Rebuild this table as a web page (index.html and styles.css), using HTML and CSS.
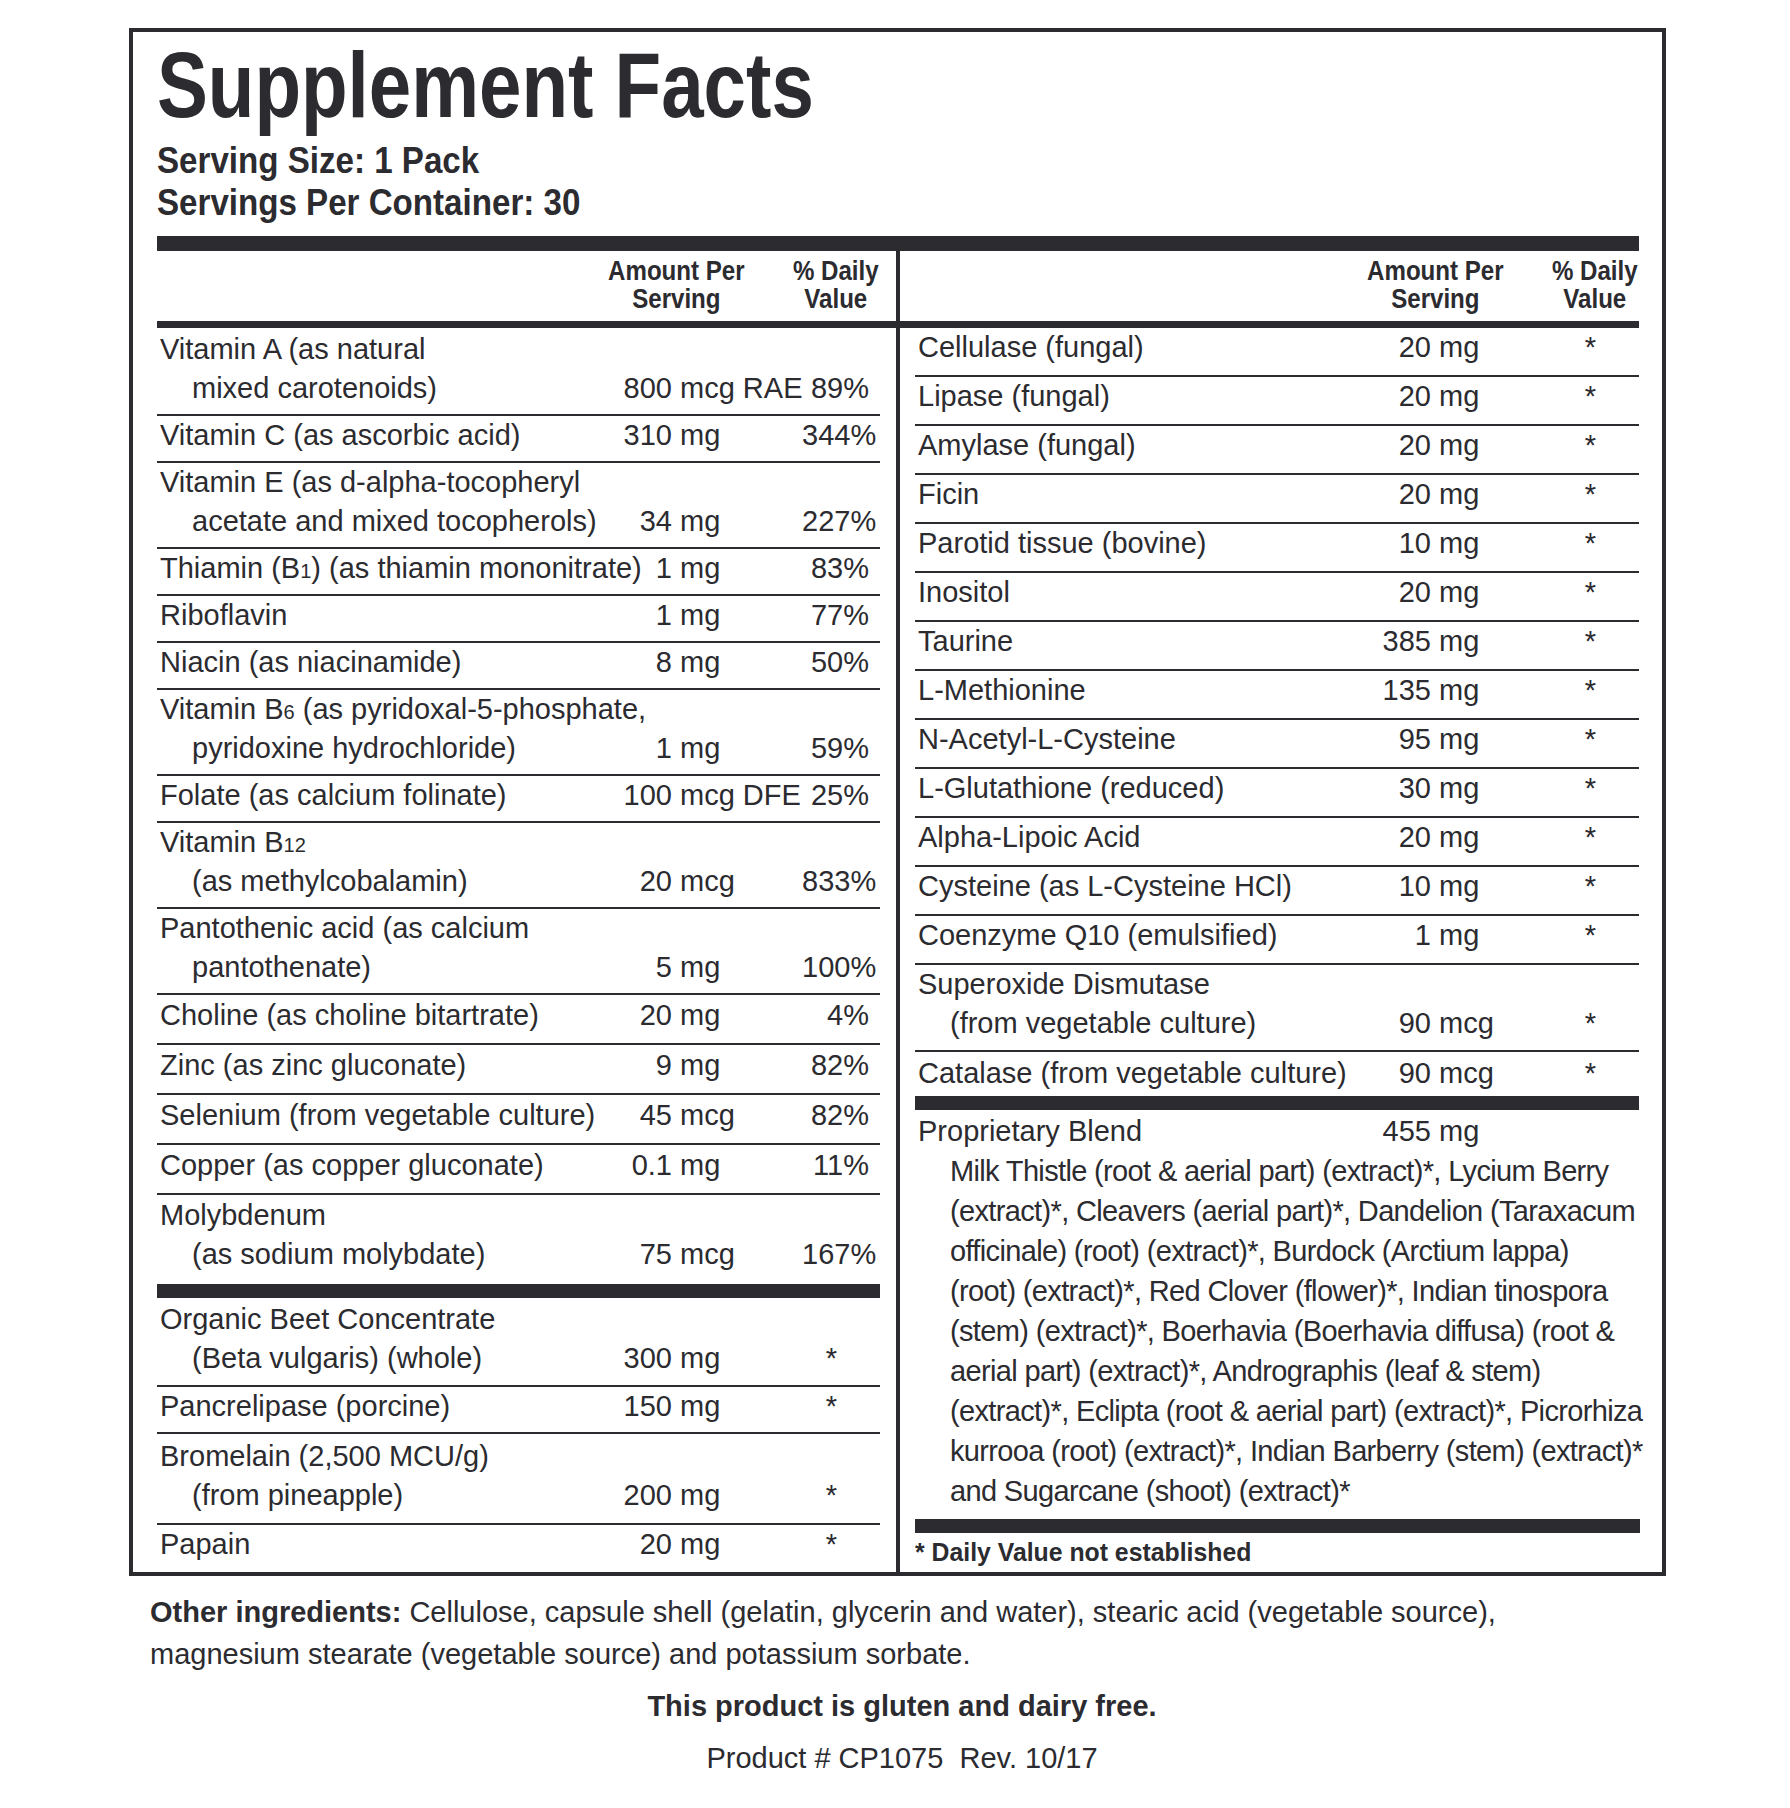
FILE: index.html
```html
<!DOCTYPE html>
<html lang="en">
<head>
<meta charset="utf-8">
<title>Supplement Facts</title>
<link rel="stylesheet" href="styles.css">
</head>
<body>
<div class="label">
  <h1 class="title">Supplement Facts</h1>
  <div class="serving">Serving Size: 1 Pack<br>Servings Per Container: 30</div>
  <div class="bar bar-top"></div>
  <div class="panel">
    <div class="col-head"><span></span><span class="hcell">Amount Per<br>Serving</span><span></span><span class="hcell">% Daily<br>Value</span></div>
    <div class="divider"></div>
    <div class="col-head"><span></span><span class="hcell">Amount Per<br>Serving</span><span></span><span class="hcell">% Daily<br>Value</span></div>
  </div>
  <div class="bar bar-mid"></div>
  <div class="panel">
    <div class="col col-left">
      <div class="row first"><span class="name">Vitamin A (as natural<br><span class="ind">mixed carotenoids)</span></span><span class="num">800</span><span class="unit">mcg RAE</span><span class="dv">89%</span></div>
      <div class="row"><span class="name">Vitamin C (as ascorbic acid)</span><span class="num">310</span><span class="unit">mg</span><span class="dv">344%</span></div>
      <div class="row"><span class="name">Vitamin E (as d-alpha-tocopheryl<br><span class="ind">acetate and mixed tocopherols)</span></span><span class="num">34</span><span class="unit">mg</span><span class="dv">227%</span></div>
      <div class="row"><span class="name">Thiamin (B<span class="sm">1</span>) (as thiamin mononitrate)</span><span class="num">1</span><span class="unit">mg</span><span class="dv">83%</span></div>
      <div class="row"><span class="name">Riboflavin</span><span class="num">1</span><span class="unit">mg</span><span class="dv">77%</span></div>
      <div class="row"><span class="name">Niacin (as niacinamide)</span><span class="num">8</span><span class="unit">mg</span><span class="dv">50%</span></div>
      <div class="row"><span class="name">Vitamin B<span class="sm">6</span> (as pyridoxal-5-phosphate,<br><span class="ind">pyridoxine hydrochloride)</span></span><span class="num">1</span><span class="unit">mg</span><span class="dv">59%</span></div>
      <div class="row"><span class="name">Folate (as calcium folinate)</span><span class="num">100</span><span class="unit">mcg DFE</span><span class="dv">25%</span></div>
      <div class="row"><span class="name">Vitamin B<span class="sm">12</span><br><span class="ind">(as methylcobalamin)</span></span><span class="num">20</span><span class="unit">mcg</span><span class="dv">833%</span></div>
      <div class="row"><span class="name">Pantothenic acid (as calcium<br><span class="ind">pantothenate)</span></span><span class="num">5</span><span class="unit">mg</span><span class="dv">100%</span></div>
      <div class="row roomy"><span class="name">Choline (as choline bitartrate)</span><span class="num">20</span><span class="unit">mg</span><span class="dv">4%</span></div>
      <div class="row roomy"><span class="name">Zinc (as zinc gluconate)</span><span class="num">9</span><span class="unit">mg</span><span class="dv">82%</span></div>
      <div class="row roomy"><span class="name">Selenium (from vegetable culture)</span><span class="num">45</span><span class="unit">mcg</span><span class="dv">82%</span></div>
      <div class="row roomy"><span class="name">Copper (as copper gluconate)</span><span class="num">0.1</span><span class="unit">mg</span><span class="dv">11%</span></div>
      <div class="row roomy last-above-bar"><span class="name">Molybdenum<br><span class="ind">(as sodium molybdate)</span></span><span class="num">75</span><span class="unit">mcg</span><span class="dv">167%</span></div>
      <div class="bar bar-col"></div>
      <div class="row beet"><span class="name">Organic Beet Concentrate<br><span class="ind">(Beta vulgaris) (whole)</span></span><span class="num">300</span><span class="unit">mg</span><span class="dv star">*</span></div>
      <div class="row"><span class="name">Pancrelipase (porcine)</span><span class="num">150</span><span class="unit">mg</span><span class="dv star">*</span></div>
      <div class="row bromelain"><span class="name">Bromelain (2,500 MCU/g)<br><span class="ind">(from pineapple)</span></span><span class="num">200</span><span class="unit">mg</span><span class="dv star">*</span></div>
      <div class="row papain"><span class="name">Papain</span><span class="num">20</span><span class="unit">mg</span><span class="dv star">*</span></div>
    </div>
    <div class="divider"></div>
    <div class="col col-right">
      <div class="row"><span class="name">Cellulase (fungal)</span><span class="num">20</span><span class="unit">mg</span><span class="dv star">*</span></div>
      <div class="row"><span class="name">Lipase (fungal)</span><span class="num">20</span><span class="unit">mg</span><span class="dv star">*</span></div>
      <div class="row"><span class="name">Amylase (fungal)</span><span class="num">20</span><span class="unit">mg</span><span class="dv star">*</span></div>
      <div class="row"><span class="name">Ficin</span><span class="num">20</span><span class="unit">mg</span><span class="dv star">*</span></div>
      <div class="row"><span class="name">Parotid tissue (bovine)</span><span class="num">10</span><span class="unit">mg</span><span class="dv star">*</span></div>
      <div class="row"><span class="name">Inositol</span><span class="num">20</span><span class="unit">mg</span><span class="dv star">*</span></div>
      <div class="row"><span class="name">Taurine</span><span class="num">385</span><span class="unit">mg</span><span class="dv star">*</span></div>
      <div class="row"><span class="name">L-Methionine</span><span class="num">135</span><span class="unit">mg</span><span class="dv star">*</span></div>
      <div class="row"><span class="name">N-Acetyl-L-Cysteine</span><span class="num">95</span><span class="unit">mg</span><span class="dv star">*</span></div>
      <div class="row"><span class="name">L-Glutathione (reduced)</span><span class="num">30</span><span class="unit">mg</span><span class="dv star">*</span></div>
      <div class="row"><span class="name">Alpha-Lipoic Acid</span><span class="num">20</span><span class="unit">mg</span><span class="dv star">*</span></div>
      <div class="row"><span class="name">Cysteine (as L-Cysteine HCl)</span><span class="num">10</span><span class="unit">mg</span><span class="dv star">*</span></div>
      <div class="row"><span class="name">Coenzyme Q10 (emulsified)</span><span class="num">1</span><span class="unit">mg</span><span class="dv star">*</span></div>
      <div class="row sod"><span class="name">Superoxide Dismutase<br><span class="ind">(from vegetable culture)</span></span><span class="num">90</span><span class="unit">mcg</span><span class="dv star">*</span></div>
      <div class="row catalase"><span class="name">Catalase (from vegetable culture)</span><span class="num">90</span><span class="unit">mcg</span><span class="dv star">*</span></div>
      <div class="bar bar-col"></div>
      <div class="blend">
        <div class="row blend-head"><span class="name">Proprietary Blend</span><span class="num">455</span><span class="unit">mg</span><span class="dv"></span></div>
        <p class="blend-text">Milk Thistle (root &amp; aerial part) (extract)*, Lycium Berry<br>(extract)*, Cleavers (aerial part)*, Dandelion (Taraxacum<br>officinale) (root) (extract)*, Burdock (Arctium lappa)<br>(root) (extract)*, Red Clover (flower)*, Indian tinospora<br>(stem) (extract)*, Boerhavia (Boerhavia diffusa) (root &amp;<br>aerial part) (extract)*, Andrographis (leaf &amp; stem)<br>(extract)*, Eclipta (root &amp; aerial part) (extract)*, Picrorhiza<br>kurrooa (root) (extract)*, Indian Barberry (stem) (extract)*<br>and Sugarcane (shoot) (extract)*</p>
      </div>
      <div class="bar bar-col bar-wide"></div>
      <div class="note"><span class="note-text">* Daily Value not established</span></div>
    </div>
  </div>
</div>
<div class="footer">
  <p class="other"><b>Other ingredients:</b> Cellulose, capsule shell (gelatin, glycerin and water), stearic acid (vegetable source), magnesium stearate (vegetable source) and potassium sorbate.</p>
  <p class="gf">This product is gluten and dairy free.</p>
  <p class="prod">Product # CP1075&nbsp; Rev. 10/17</p>
</div>
</body>
</html>
```
FILE: styles.css
```css
* {
  box-sizing: border-box;
  margin: 0;
  padding: 0;
}

body {
  margin: 0;
  background: #ffffff;
  color: #2b2b30;
  font-family: "Liberation Sans", Arial, sans-serif;
  font-size: 29px;
  line-height: 39px;
}

.label {
  width: 1537px;
  margin: 28px 0 0 129px;
  border: 4px solid #2b2b30;
  padding: 13px 23px 0 24px;
}

/* Condensed bold headings: Liberation Sans Bold squeezed horizontally */
.title,
.serving,
.hcell,
.note-text {
  font-weight: 700;
  white-space: nowrap;
}

.title {
  font-size: 93px;
  line-height: 80px;
  transform: scaleX(0.82);
  transform-origin: left center;
}

.serving {
  margin-top: 15px;
  font-size: 36px;
  line-height: 42px;
  transform: scaleX(0.92);
  transform-origin: left center;
}

.bar {
  background: #2b2b30;
}

.bar-top {
  height: 15px;
  margin-top: 12px;
}

.bar-mid {
  height: 7px;
}

.bar-col {
  height: 14px;
}

.bar-wide {
  margin-right: -1px;
}

.panel {
  display: grid;
  grid-template-columns: 723px 4px 724px;
  justify-content: space-between;
}

.divider {
  background: #2b2b30;
}

.col-head {
  display: grid;
  grid-template-columns: minmax(0, 1fr) 160px 36px 88px;
  padding: 6px 0 8px;
  font-size: 28px;
  line-height: 28px;
  text-align: center;
}

.hcell {
  justify-self: unsafe center;
  width: max-content;
  transform: scaleX(0.86);
  transform-origin: center center;
}

.row {
  display: grid;
  grid-template-columns: minmax(0, 1fr) 90px 130px 67px;
  align-items: end;
  padding: 0 11px 6px 3px;
  border-bottom: 2px solid #2b2b30;
  line-height: 39px;
}

.name {
  white-space: nowrap;
}

.ind {
  padding-left: 32px;
}

.sm {
  font-size: 20px;
  line-height: 1;
}

.num {
  text-align: right;
  white-space: nowrap;
}

.unit {
  padding-left: 8px;
  white-space: nowrap;
}

.dv {
  text-align: right;
  white-space: nowrap;
}

.star {
  padding-right: 32px;
}

.first {
  padding-top: 2px;
}

.roomy {
  padding-top: 1px;
  padding-bottom: 8px;
}

.last-above-bar {
  border-bottom: none;
  padding-bottom: 10px;
}

.beet {
  padding-top: 2px;
  padding-bottom: 7px;
}

.bromelain {
  padding-top: 3px;
  padding-bottom: 8px;
}

.papain {
  border-bottom: none;
  padding-bottom: 8px;
}

.col-right .row {
  padding-bottom: 8px;
}

.col-right .sod {
  padding-bottom: 7px;
}

.col-right .catalase {
  border-bottom: none;
  padding-top: 2px;
  padding-bottom: 3px;
}

.blend {
  padding: 1px 0 8px;
  line-height: 40px;
}

.col-right .blend-head {
  border-bottom: none;
  padding-bottom: 0;
  line-height: 40px;
}

.blend-text {
  padding-left: 35px;
  white-space: nowrap;
  letter-spacing: -0.65px;
}

.note {
  padding: 3px 0 4px 0;
  font-size: 26.5px;
  line-height: 32px;
}

.note-text {
  display: inline-block;
  transform: scaleX(0.936);
  transform-origin: left center;
}

.footer {
  width: 1546px;
  margin-left: 129px;
}

.other {
  margin-top: 15px;
  padding: 0 125px 0 21px;
  line-height: 42px;
}

.other b {
  font-weight: 700;
}

.gf {
  margin-top: 11px;
  text-align: center;
  font-weight: 700;
  line-height: 40px;
}

.prod {
  margin-top: 12px;
  text-align: center;
  line-height: 40px;
}
```
